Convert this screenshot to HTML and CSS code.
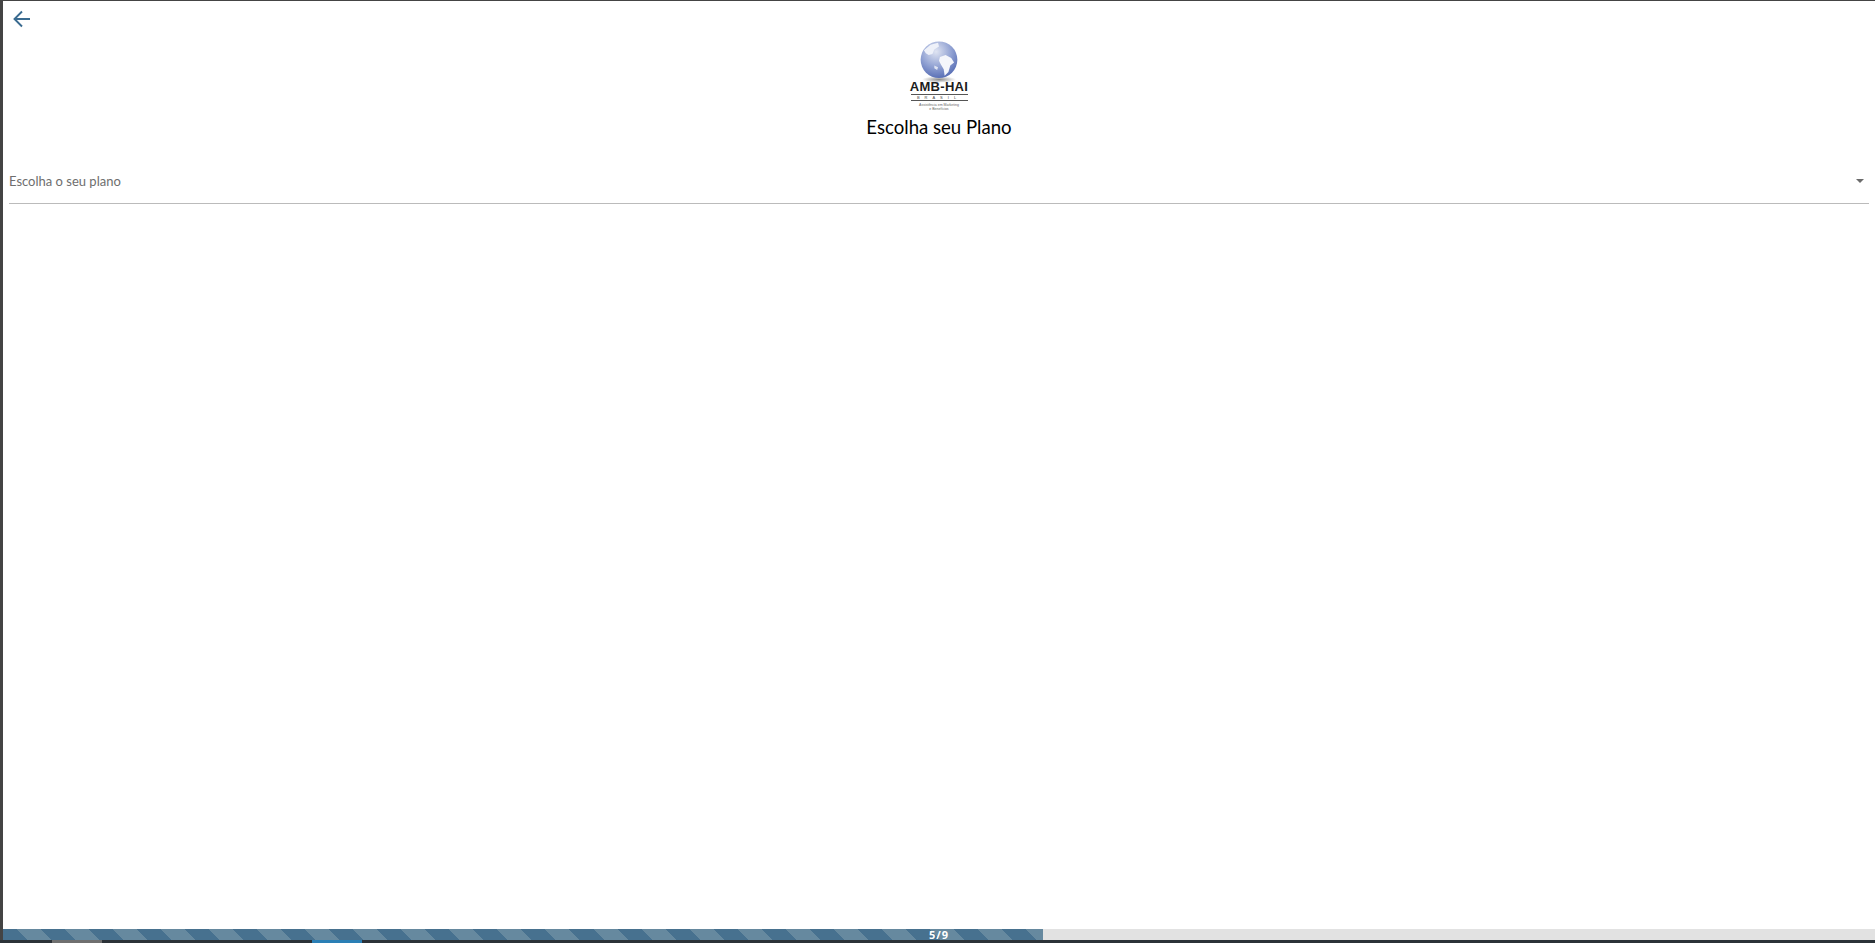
FILE: index.html
```html
<!DOCTYPE html>
<html lang="pt-BR">
<head>
  <meta charset="UTF-8">
  <title>Escolha seu Plano</title>
  <link rel="stylesheet" href="styles.css">
</head>
<body>
  <div class="janela">
    <main class="conteudo">
      <a class="voltar" href="#">
        <svg width="24" height="24" viewBox="0 0 24 24"><path d="M20 12H5M12 4.500L4.500 12L12 19.500" fill="none" stroke="#3a6b90" stroke-width="1.900"/></svg>
      </a>
      <div class="logo">
        <svg class="globo" width="44" height="46" viewBox="0 0 44 46">
          <defs>
            <radialGradient id="esfera" cx="0.420" cy="0.280" r="0.780">
              <stop offset="0" stop-color="#dfe4f2"/>
              <stop offset="0.550" stop-color="#8fa0d2"/>
              <stop offset="1" stop-color="#4f66b0"/>
            </radialGradient>
            <radialGradient id="sombra">
              <stop offset="0" stop-color="#8c8c8c"/>
              <stop offset="1" stop-color="#fff"/>
            </radialGradient>
          </defs>
          <ellipse cx="22" cy="42" rx="18" ry="3.500" fill="url(#sombra)"/>
          <circle cx="22" cy="21" r="19.500" fill="url(#esfera)"/>
          <path d="M23 18l6-2 6 3 3 5-4 3-2 7-4 4-1-7-3-5-2-4z" fill="#f4f6fb"/>
          <path d="M6 11l7-6 8-2 1 4-5 3-2 5-4 1-3-2z" fill="#eef1f9"/>
          <path d="M17 27l4 2-1 3-3-2z" fill="#dfe4f2"/>
        </svg>
        <div class="marca">AMB-HAI</div>
        <div class="pais"><span>BRASIL</span></div>
        <div class="legenda">Assistência em Marketing<br>e Benefícios</div>
      </div>
      <h1 class="titulo">Escolha seu Plano</h1>
      <div class="campo">
        <span class="placeholder">Escolha o seu plano</span>
        <span class="seta"></span>
      </div>
    </main>
    <div class="progresso">
      <div class="preenchido"></div>
      <span class="passos">5/9</span>
    </div>
  </div>
  <div class="barra">
    <span class="aba aba-cinza"></span>
    <span class="aba aba-azul"></span>
  </div>
</body>
</html>
```

FILE: styles.css
```css
html, body {
  height: 100%;
}

body {
  margin: 0;
  display: flex;
  flex-direction: column;
  overflow: hidden;
  background-color: #444;
  font-family: Lato, "Open Sans", sans-serif;
}

.janela {
  flex: 1;
  display: flex;
  flex-direction: column;
  margin: 1px 0 0 3px;
  background-color: #fff;
  min-height: 0;
}

.conteudo {
  flex: 1;
  display: flex;
  flex-direction: column;
  padding: 0 6px;
}

.voltar {
  display: block;
  width: 24px;
  height: 24px;
  margin: 6px 0 0 1px;
}

.logo {
  display: flex;
  flex-direction: column;
  align-items: center;
  margin-top: 9px;
  height: 71px;
}

.globo {
  display: block;
  margin-bottom: -3px;
}

.marca {
  font-family: "Liberation Sans", sans-serif;
  font-weight: bold;
  font-size: 13px;
  line-height: 14px;
  letter-spacing: 0.3px;
  color: #1c1c1c;
}

.pais {
  width: 57px;
  height: 5px;
  border-top: 1px solid #555;
  border-bottom: 1px solid #555;
  font-family: "Liberation Sans", sans-serif;
  font-size: 4px;
  line-height: 5px;
  letter-spacing: 5px;
  text-align: center;
  color: #444;
  overflow: hidden;
}

.legenda {
  margin-top: 2px;
  font-family: "Liberation Sans", sans-serif;
  font-size: 3.500px;
  line-height: 4px;
  text-align: center;
  color: #666;
}

.titulo {
  margin: 3px 0 0;
  font-size: 18.600px;
  line-height: 26px;
  font-weight: 400;
  text-align: center;
  color: #000;
}

.campo {
  display: flex;
  align-items: center;
  justify-content: space-between;
  height: 64px;
  padding: 18px 5px 0 0;
  border-bottom: 1px solid #bbb;
  box-sizing: border-box;
}

.placeholder {
  font-size: 13px;
  color: #6e6e6e;
}

.seta {
  width: 0;
  height: 0;
  border-left: 4.500px solid transparent;
  border-right: 4.500px solid transparent;
  border-top: 4.500px solid #6b6b6b;
}

.progresso {
  position: relative;
  display: flex;
  align-items: center;
  justify-content: center;
  height: 11px;
  background-color: #e2e2e2;
}

.preenchido {
  position: absolute;
  left: 0;
  top: 0;
  bottom: 0;
  width: 1040px;
  background-color: #47718f;
  background-image: repeating-linear-gradient(45deg, #47718f 0, #47718f 17px, #66899f 17px, #66899f 34px);
}

.passos {
  position: relative;
  font-family: "Open Sans", sans-serif;
  font-size: 11px;
  line-height: 11px;
  font-weight: 700;
  letter-spacing: 1px;
  color: #fff;
}

.barra {
  display: flex;
  height: 3px;
  padding-left: 52px;
  background-color: #2b3238;
}

.aba {
  width: 50px;
}

.aba-cinza {
  background-color: #6f6f6f;
}

.aba-azul {
  margin-left: 210px;
  background-color: #2a7fb5;
}
```
